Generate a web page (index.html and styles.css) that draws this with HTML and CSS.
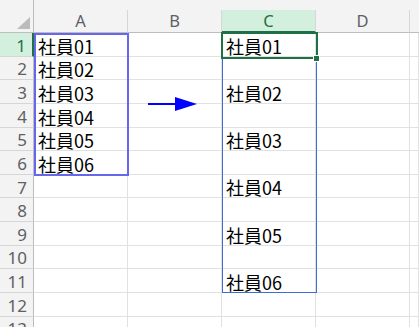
FILE: index.html
```html
<!DOCTYPE html>
<html lang="ja">
<head>
<meta charset="utf-8">
<link rel="stylesheet" href="styles.css">
</head>
<body>
<div class="sheet">
  <div class="corner"><span class="tri"></span></div>
  <div class="band"></div>
  <div class="ch">A</div><div class="ch">B</div><div class="ch hl">C</div><div class="ch">D</div><div class="ch last"></div>

  <div class="rh hl">1</div><div class="c">社員01</div><div class="c"></div><div class="c">社員01</div><div class="c"></div><div class="c"></div>
  <div class="rh">2</div><div class="c">社員02</div><div class="c"></div><div class="c"></div><div class="c"></div><div class="c"></div>
  <div class="rh">3</div><div class="c">社員03</div><div class="c"></div><div class="c">社員02</div><div class="c"></div><div class="c"></div>
  <div class="rh">4</div><div class="c">社員04</div><div class="c"></div><div class="c"></div><div class="c"></div><div class="c"></div>
  <div class="rh">5</div><div class="c">社員05</div><div class="c"></div><div class="c">社員03</div><div class="c"></div><div class="c"></div>
  <div class="rh">6</div><div class="c">社員06</div><div class="c"></div><div class="c"></div><div class="c"></div><div class="c"></div>
  <div class="rh">7</div><div class="c"></div><div class="c"></div><div class="c">社員04</div><div class="c"></div><div class="c"></div>
  <div class="rh">8</div><div class="c"></div><div class="c"></div><div class="c"></div><div class="c"></div><div class="c"></div>
  <div class="rh">9</div><div class="c"></div><div class="c"></div><div class="c">社員05</div><div class="c"></div><div class="c"></div>
  <div class="rh">10</div><div class="c"></div><div class="c"></div><div class="c"></div><div class="c"></div><div class="c"></div>
  <div class="rh">11</div><div class="c"></div><div class="c"></div><div class="c">社員06</div><div class="c"></div><div class="c"></div>
  <div class="rh">12</div><div class="c"></div><div class="c"></div><div class="c"></div><div class="c"></div><div class="c"></div>
  <div class="rh">13</div><div class="c"></div><div class="c"></div><div class="c"></div><div class="c"></div><div class="c"></div>

  <div class="sel-src"></div>
  <div class="col-outline"></div>
  <div class="active"></div>
  <div class="handle"></div>
  <svg class="arrow" width="52" height="16" viewBox="0 0 52 16">
    <rect x="0" y="7" width="28" height="2" fill="#0000ff"/>
    <polygon points="27,1 49,8 27,15" fill="#0000ff"/>
  </svg>
</div>
</body>
</html>
```

FILE: styles.css
```css
html, body {
  margin: 0;
  padding: 0;
  background: #ffffff;
}
body {
  width: 419px;
  height: 327px;
  overflow: hidden;
}
.sheet {
  position: relative;
  display: grid;
  grid-template-columns: 34px 94px 94px 94px 94px 1fr;
  grid-template-rows: 10px 23px repeat(13, 23.625px);
  font-family: "Noto Sans", "Liberation Sans", sans-serif;
}
.corner {
  grid-row: 1 / 3;
  grid-column: 1;
  background: #f3f3f3;
  border-right: 1px solid #bdbdbd;
  border-bottom: 1px solid #bdbdbd;
  box-sizing: border-box;
  position: relative;
}
.tri {
  position: absolute;
  right: 3px;
  bottom: 3px;
  width: 0;
  height: 0;
  border-style: solid;
  border-width: 0 0 12px 13px;
  border-color: transparent transparent #bcbcbc transparent;
}
.band {
  grid-row: 1;
  grid-column: 2 / 7;
  background: #f3f3f3;
}
.ch {
  background: #f3f3f3;
  border-right: 1px solid #d6d6d6;
  border-bottom: 1px solid #bdbdbd;
  box-sizing: border-box;
  display: flex;
  align-items: center;
  justify-content: center;
  font-size: 16.5px;
  color: #5f5f66;
  line-height: 1;
  padding-top: 1px;
}
.ch.last {
  border-right: none;
}
.ch.hl {
  background: #d3efde;
  color: #1e7145;
  border-bottom: 2px solid #1e7145;
}
.rh {
  background: #f3f3f3;
  border-right: 1px solid #bdbdbd;
  border-bottom: 1px solid #d6d6d6;
  box-sizing: border-box;
  display: flex;
  align-items: center;
  justify-content: flex-end;
  padding: 2px 6px 0 0;
  font-size: 17px;
  color: #5f5f66;
  line-height: 1;
}
.rh.hl {
  background: #d3efde;
  color: #1e7145;
  border-right: 2px solid #1e7145;
  padding-right: 6px;
}
.c {
  border-right: 1px solid #e1e1e1;
  border-bottom: 1px solid #e1e1e1;
  box-sizing: border-box;
  display: flex;
  align-items: flex-end;
  padding: 0 0 1px 4px;
  font-family: "Noto Sans CJK JP", "Noto Sans", sans-serif;
  font-size: 18px;
  line-height: 1;
  color: #000;
  white-space: nowrap;
  overflow: visible;
}
.sel-src {
  position: absolute;
  left: 34px;
  top: 33px;
  width: 95px;
  height: 143px;
  border: 2px solid #6767ee;
  box-sizing: border-box;
}
.col-outline {
  position: absolute;
  left: 222px;
  top: 58px;
  width: 95px;
  height: 235px;
  border: 1px solid #3c6fcc;
  border-top: none;
  box-sizing: border-box;
}
.active {
  position: absolute;
  left: 221px;
  top: 32px;
  width: 97px;
  height: 27px;
  border: 2px solid #1e7145;
  box-sizing: border-box;
}
.handle {
  position: absolute;
  left: 313px;
  top: 55px;
  width: 7px;
  height: 7px;
  background: #1e7145;
  border: 1px solid #ffffff;
  box-sizing: border-box;
}
.arrow {
  position: absolute;
  left: 148px;
  top: 96px;
}
```
